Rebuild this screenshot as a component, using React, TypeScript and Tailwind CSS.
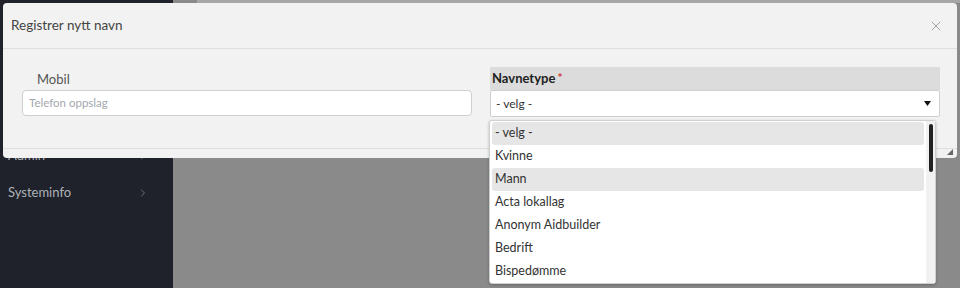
import { X, ChevronRight } from 'lucide-react';

const options = [
  { label: '- velg -', active: true },
  { label: 'Kvinne' },
  { label: 'Mann', active: true },
  { label: 'Acta lokallag' },
  { label: 'Anonym Aidbuilder' },
  { label: 'Bedrift' },
  { label: 'Bispedømme' },
];

export default function App() {
  return (
    <div className="relative w-[960px] h-[288px] overflow-hidden font-['Lato',sans-serif]">
      {/* Page behind the modal */}
      <div className="flex h-full">
        <aside className="w-[173px] bg-[#1f222b] pt-[137px]">
          <div className="flex items-center justify-between h-[37px] pl-2 pr-6 text-[13px] text-[#aeb1b8]">
            Admin <ChevronRight size={12} className="text-[#6b6f78]" />
          </div>
          <div className="flex items-center justify-between h-[37px] pl-2 pr-6 text-[13px] text-[#aeb1b8]">
            Systeminfo <ChevronRight size={12} className="text-[#6b6f78]" />
          </div>
        </aside>
        <main className="flex-1 bg-[#8a8a8a]">
          <div className="h-[3px] bg-[#a6a6a6] ml-6" />
        </main>
      </div>

      {/* Modal */}
      <div className="absolute left-[3px] top-[3px] w-[954px] h-[155px] bg-[#f2f2f2] rounded-[4px] flex flex-col">
        <div className="flex items-center justify-between h-[46px] pl-2 pr-[13px] border-b border-[#dedede]">
          <h2 className="text-[13.5px] text-[#444]">Registrer nytt navn</h2>
          <X size={16} strokeWidth={1.4} className="text-[#9a9ca3]" />
        </div>

        <div className="flex gap-[18px] pl-[19px] pr-[17px] pt-[18px] h-[100px] border-b border-[#dedede]">
          <div className="flex-1 pt-[3px]">
            <label className="block pl-[15px] h-[19px] text-[13px] text-[#555]">Mobil</label>
            <input
              placeholder="Telefon oppslag"
              className="w-full h-[26px] px-[6px] bg-white border border-[#cfcfcf] rounded-[4px] text-[11.5px] text-[#333] placeholder:text-[#a3a7ae] outline-none"
            />
          </div>
          <div className="flex-1">
            <div className="flex items-center h-[23px] px-[2px] bg-[#dcdcdc] text-[13px] font-bold text-[#222]">
              Navnetype<span className="ml-[2px] -mt-[2px] text-[#d93030] text-[12px]">*</span>
            </div>
            <div className="flex items-center justify-between h-[27px] px-[5px] pr-[8px] bg-white border border-[#cfcfcf] rounded-[2px] text-[12px] text-[#333]">
              - velg -
              <svg width="7" height="5" viewBox="0 0 7 5"><path d="M0 0h7L3.5 5z" fill="#111" /></svg>
            </div>
          </div>
        </div>

        <div className="flex-1 flex justify-end items-end pr-[4px] pb-[3px]">
          <svg width="6" height="6" viewBox="0 0 6 6"><path d="M6 0v6H0z" fill="#666" /></svg>
        </div>
      </div>

      {/* Open dropdown list */}
      <div className="absolute left-[489px] top-[120px] w-[447px] h-[164px] bg-white border border-[#cfcfcf] rounded-[3px] shadow-[0_1px_3px_rgba(0,0,0,0.25)] flex">
        <ul className="flex-1 px-[2px] pt-[1px]">
          {options.map((o) => (
            <li
              key={o.label}
              className={`h-[23px] flex items-center pl-[3px] text-[12.5px] text-[#333] rounded-[3px] ${o.active ? 'bg-[#e6e6e6]' : ''}`}
            >
              {o.label}
            </li>
          ))}
        </ul>
        <div className="w-[9px] bg-[#f1f1f1] flex justify-center pt-[3px]">
          <div className="w-[4px] h-[48px] bg-[#222] rounded-full" />
        </div>
      </div>
    </div>
  );
}
